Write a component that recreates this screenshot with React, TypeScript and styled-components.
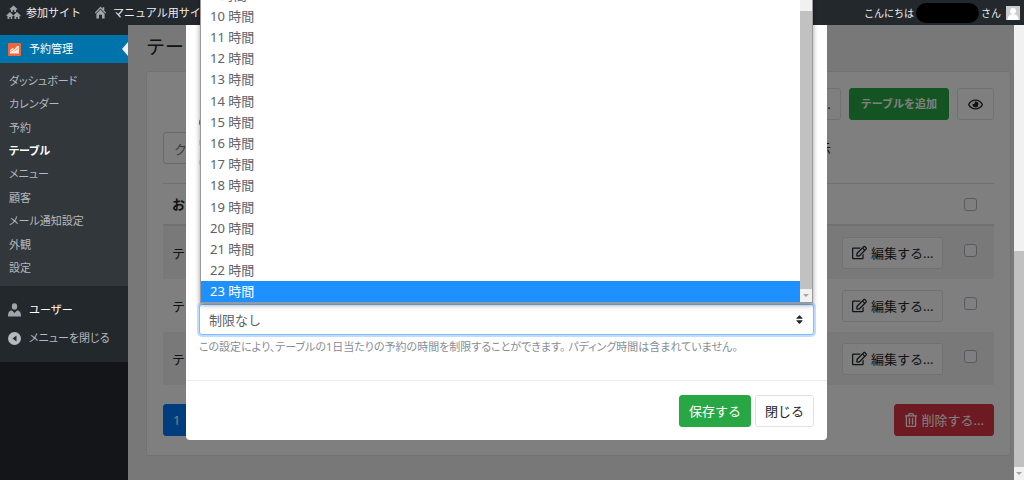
import React from "react";
import styled, { createGlobalStyle, css } from "styled-components";
import { FaRegEdit, FaRegEye, FaRegTrashAlt, FaSort } from "react-icons/fa";

const Global = createGlobalStyle`
  *, *::before, *::after { box-sizing: border-box; }
  body {
    margin: 0;
    overflow: hidden;
    background: #f1f1f1;
    font-family: "Noto Sans", "Noto Sans CJK JP", sans-serif;
    font-size: 13px;
    line-height: 20px;
    color: #212529;
  }
  button, input, select { font: inherit; color: inherit; margin: 0; }
  ul { list-style: none; margin: 0; padding: 0; }
  a { color: inherit; text-decoration: none; }
`;

const proportionalKana = css`
  font-size: 11px;
  font-feature-settings: "palt";
`;

const Screen = styled.div`
  position: relative;
  display: flex;
  flex-direction: column;
  height: 100vh;
`;

const AdminBar = styled.header`
  position: relative;
  z-index: 20;
  flex: none;
  display: flex;
  align-items: center;
  gap: 12px;
  height: 25px;
  padding: 0 4px 0 6px;
  background: #23282d;
  color: #eee;
  font-size: 11px;
  line-height: 24px;
`;

const BarLink = styled.a`
  display: flex;
  align-items: center;
  gap: 5px;
  white-space: nowrap;
  svg { color: #a0a5aa; }
`;

const Account = styled(BarLink)`
  margin-left: auto;
  gap: 2px;
  font-size: 10px;
`;

const HiddenName = styled.span`
  width: 63px;
  height: 20px;
  border-radius: 10px;
  background: #000;
`;

const Avatar = styled.svg`
  margin-left: 3px;
  background: #ccc;
`;

const Columns = styled.div`
  flex: 1;
  min-height: 0;
  display: flex;
`;

const Sidebar = styled.nav`
  position: relative;
  z-index: 20;
  flex: none;
  width: 128px;
  background: #141519;
  color: #eee;
`;

const Menu = styled.div`
  padding: 10px 0;
  background: #23282d;
`;

const MenuLink = styled.a<{ $active?: boolean; $muted?: boolean }>`
  display: flex;
  align-items: center;
  gap: 8px;
  height: 28px;
  padding-left: 8px;
  font-size: 11px;
  color: ${(p) => (p.$muted ? "#b4b9be" : "#fff")};
  svg { color: #a0a5aa; }
  ${(p) => p.$muted && proportionalKana}
  ${(p) =>
    p.$active &&
    css`
      position: relative;
      background: #0073aa;
      &::after {
        content: "";
        position: absolute;
        right: 0;
        top: 7px;
        border: 7px solid transparent;
        border-left: 0;
        border-right: 6px solid #f1f1f1;
      }
    `}
`;

const SubMenu = styled.ul`
  display: flex;
  flex-direction: column;
  height: 223px;
  padding: 6px 0 6px 9px;
  margin-bottom: 10px;
  background: #32373c;
`;

const SubItem = styled.li<{ $current?: boolean }>`
  flex: 1;
  display: flex;
  align-items: center;
  ${proportionalKana}
  font-weight: ${(p) => (p.$current ? 700 : 400)};
  color: ${(p) => (p.$current ? "#fff" : "#b4b9be")};
`;

const Main = styled.main`
  flex: 1;
  min-width: 0;
  padding: 8px 3px 0 18px;
`;

const Heading = styled.h1`
  margin: 0 0 10px;
  font-size: 19px;
  line-height: 28px;
  font-weight: 400;
`;

const Card = styled.section`
  padding: 16px 16px 19px;
  border: 1px solid #e5e5e5;
  border-radius: 3px;
  background: #fff;
`;

const Row = styled.div<{ $end?: boolean; $gap?: number }>`
  display: flex;
  align-items: center;
  justify-content: ${(p) => (p.$end ? "flex-end" : "space-between")};
  gap: ${(p) => p.$gap ?? 8}px;
`;

const tones = {
  light: css`background: #fff; border-color: #dee2e6; color: #212529;`,
  green: css`background: #28a745; border-color: #28a745; color: #fff;`,
  red: css`background: #dc3545; border-color: #dc3545; color: #fff;`,
  blue: css`background: #007bff; border-color: #007bff; color: #fff;`,
};

const Button = styled.button<{ $tone: keyof typeof tones; $strong?: boolean }>`
  display: inline-flex;
  align-items: center;
  justify-content: center;
  gap: 4px;
  height: 32px;
  padding: 0 9px;
  border: 1px solid;
  border-radius: 3px;
  white-space: nowrap;
  ${(p) => tones[p.$tone]}
  ${(p) => p.$strong && css`padding: 0 11px; font-size: 11px; font-weight: 700;`}
`;

const IconButton = styled(Button)`
  width: 37px;
`;

const Search = styled.input`
  width: 300px;
  height: 32px;
  padding: 0 10px;
  border: 1px solid #ced4da;
  border-radius: 3px;
  background: #fff;
  color: #6c757d;
`;

const Filters = styled(Row)`
  margin: 12px 0 19px;
  padding-right: 163px;
`;

const Check = styled.input`
  appearance: none;
  display: block;
  width: 13px;
  height: 13px;
  border: 1px solid #adb5bd;
  border-radius: 3px;
  background: #fff;
`;

const Table = styled.table`
  width: 100%;
  border-collapse: separate;
  border-spacing: 0;
  th, td {
    height: 53px;
    padding: 0 9px;
    text-align: left;
    vertical-align: middle;
  }
  th {
    height: 43px;
    border-top: 1px solid #dee2e6;
    border-bottom: 2px solid #dee2e6;
    font-weight: 700;
  }
  tbody tr:nth-child(odd) { background: #f2f2f2; }
  th:nth-child(2), td:nth-child(2) { width: 112px; padding: 0; }
  th:nth-child(3), td:nth-child(3) { width: 40px; padding: 0 10px; }
  td ${Check} { margin-bottom: 4px; }
`;

const CardFoot = styled(Row)`
  margin-top: 19px;
`;

const PageScroll = styled.div`
  position: relative;
  z-index: 20;
  flex: none;
  display: flex;
  flex-direction: column;
  justify-content: flex-end;
  align-items: center;
  width: 10px;
  background: #f1f1f1;
`;

const Thumb = styled.div`
  flex: none;
  width: 100%;
  height: 216px;
  background: #c1c1c1;
`;

const ArrowDown = styled.span`
  margin: 5px 0;
  border: 3px solid transparent;
  border-top-color: #a3a3a3;
  border-bottom: 0;
`;

const Backdrop = styled.div`
  position: absolute;
  inset: 0 10px 0 0;
  background: rgba(0, 0, 0, 0.5);
`;

const ModalLayer = styled.div`
  position: absolute;
  inset: 0 11px auto 0;
  display: flex;
  justify-content: center;
`;

const Dialog = styled.div`
  width: 641px;
  border-radius: 0 0 4px 4px;
  background: #fff;
`;

const DialogBody = styled.div`
  padding: 90px 13px 23px;
`;

const Choices = styled.div`
  display: flex;
  flex-direction: column;
  gap: 7px;
  height: 214px;
  padding-top: 26px;
`;

const Radio = styled.input`
  appearance: none;
  width: 13px;
  height: 13px;
  border: 1px solid #ced4da;
  border-radius: 50%;
  &:checked { border-color: #007bff; background: #007bff; }
`;

const Field = styled.div`
  position: relative;
`;

const SelectBox = styled.div`
  position: relative;
  display: flex;
  align-items: center;
  svg { position: absolute; right: 9px; }
`;

const Select = styled.select`
  appearance: none;
  width: 100%;
  height: 31px;
  padding: 0 9px;
  border: 1px solid #80bdff;
  border-radius: 3px;
  box-shadow: 0 0 0 2px #bfdeff;
  outline: 0;
  background: #fff;
  color: #5c6268;
`;

const Popup = styled.div`
  position: absolute;
  z-index: 30;
  left: 1px;
  right: 1px;
  bottom: calc(100% + 1px);
  display: flex;
  height: 320px;
  border: 1px solid #9a9a9a;
  background: #fff;
  box-shadow: 0 2px 5px rgba(0, 0, 0, 0.4);
`;

const Options = styled.ul`
  flex: 1;
  display: flex;
  flex-direction: column;
`;

const Option = styled.li<{ $on: boolean }>`
  flex: 1;
  display: flex;
  align-items: center;
  padding-left: 9px;
  background: ${(p) => (p.$on ? "#1e90ff" : "#fff")};
  color: ${(p) => (p.$on ? "#fff" : "#5c6268")};
`;

const PopupScroll = styled.div`
  display: flex;
  flex-direction: column;
  align-items: center;
  width: 12px;
  padding-top: 27px;
  background: #f1f1f1;
`;

const PopupThumb = styled.div`
  flex: 1;
  width: 100%;
  background: #c1c1c1;
`;

const Help = styled.p`
  margin: 2px 0 0;
  ${proportionalKana}
  color: #868e96;
`;

const DialogFoot = styled(Row)`
  padding: 14px 13px 13px;
  border-top: 1px solid #e9ecef;
`;

const Network = () => (
  <svg width="15" height="15" viewBox="0 0 30 30" fill="currentColor" fillRule="evenodd" aria-hidden="true">
    <path d="M15 1l8 7-1.500 1.500L20 8.500V14h-3.500v-4h-3v4H10V8.500L8.500 9.500 7 8z" />
    <path d="M8 14l7 7-1.500 1.500-1-1V28H9.500v-4h-3v4H3v-6.500l-1 1L.5 21z" />
    <path d="M22 14l7.500 7-1.500 1.500-1-1V28h-3.500v-4h-3v4H17v-6.500l-1 1L14.500 21z" />
  </svg>
);

const Home = () => (
  <svg width="15" height="15" viewBox="0 0 20 20" fill="currentColor" aria-hidden="true">
    <path d="M16 8.500l1.500 1.600-1.100 1.100L10 4.600l-6.400 6.600-1.100-1.100L10 2l2.800 2.900V3H15v4.300zM10 6l5.500 5.700V18H12v-5H8v5H4.500v-6.300z" />
  </svg>
);

const Person = () => (
  <svg width="13" height="14" viewBox="0 0 13 14" fill="currentColor" aria-hidden="true">
    <ellipse cx="6.500" cy="3.400" rx="2.700" ry="3.200" />
    <path d="M4 7.500l2.500 2.500L9 7.500c2.600 0 4 1.500 4 6H0c0-4.500 1.400-6 4-6z" />
  </svg>
);

const Brand = () => (
  <svg width="13" height="13" viewBox="0 0 13 13" aria-hidden="true">
    <rect width="13" height="13" rx="1" fill="#f0653a" />
    <path d="M2 7l2.500-2 2 1L9 3h2v7.500H2z" fill="#fde6dd" />
    <path d="M2.500 8.500l3-2 2 1 3-2.500" stroke="#f5a184" fill="none" />
  </svg>
);

const Collapse = () => (
  <svg width="13" height="13" viewBox="0 0 13 13" aria-hidden="true">
    <circle cx="6.500" cy="6.500" r="6.500" fill="#b4b9be" />
    <path d="M8.500 3.500v6l-4-3z" fill="#23282d" />
  </svg>
);

const submenu = ["ダッシュボード", "カレンダー", "予約", "テーブル", "メニュー", "顧客", "メール通知設定", "外観", "設定"];
const hours = Array.from({ length: 15 }, (_, i) => `${i + 9} 時間`);

export default function App() {
  return (
    <Screen>
      <Global />
      <AdminBar>
        <BarLink href="#sites"><Network />参加サイト</BarLink>
        <BarLink href="#site"><Home />マニュアル用サイト</BarLink>
        <Account href="#account">
          こんにちは<HiddenName />さん
          <Avatar width="14" height="14" viewBox="0 0 14 14" aria-hidden="true">
            <circle cx="7" cy="5" r="3" fill="#fff" />
            <path d="M1.500 14c0-8 11-8 11 0z" fill="#fff" />
          </Avatar>
        </Account>
      </AdminBar>
      <Columns>
        <Sidebar>
          <Menu>
            <MenuLink href="#booking" $active><Brand />予約管理</MenuLink>
            <SubMenu>
              {submenu.map((t) => (
                <SubItem key={t} $current={t === "テーブル"}><a href="#sub">{t}</a></SubItem>
              ))}
            </SubMenu>
            <MenuLink href="#users"><Person />ユーザー</MenuLink>
            <MenuLink href="#collapse" $muted><Collapse />メニューを閉じる</MenuLink>
          </Menu>
        </Sidebar>
        <Main>
          <Heading>テー</Heading>
          <Card>
            <Row $end>
              <Button $tone="light">...</Button>
              <Button $tone="green" $strong>テーブルを追加</Button>
              <IconButton $tone="light" aria-label="表示"><FaRegEye size={15} /></IconButton>
            </Row>
            <Filters>
              <Search aria-label="検索" defaultValue="ク" />
              <span>表示</span>
            </Filters>
            <Table>
              <thead>
                <tr><th>お</th><th /><th><Check type="checkbox" aria-label="すべて" /></th></tr>
              </thead>
              <tbody>
                {[1, 2, 3].map((n) => (
                  <tr key={n}>
                    <td>テ</td>
                    <td><Button $tone="light"><FaRegEdit size={15} />編集する...</Button></td>
                    <td><Check type="checkbox" aria-label={`テーブル${n}`} /></td>
                  </tr>
                ))}
              </tbody>
            </Table>
            <CardFoot>
              <Button $tone="blue">1</Button>
              <Button $tone="red"><FaRegTrashAlt size={14} />削除する...</Button>
            </CardFoot>
          </Card>
        </Main>
        <PageScroll><Thumb /><ArrowDown /></PageScroll>
      </Columns>
      <Backdrop />
      <ModalLayer>
        <Dialog role="dialog" aria-label="テーブル">
          <DialogBody>
            <Choices>
              <Radio type="radio" name="capacity" defaultChecked aria-label="1" />
              <Radio type="radio" name="capacity" aria-label="2" />
              <Radio type="radio" name="capacity" aria-label="3" />
            </Choices>
            <Field>
              <SelectBox>
                <Select aria-label="時間制限"><option>制限なし</option></Select>
                <FaSort size={11} />
              </SelectBox>
              <Popup>
                <Options role="listbox">
                  {hours.map((h) => (
                    <Option key={h} role="option" $on={h === "23 時間"} aria-selected={h === "23 時間"}>{h}</Option>
                  ))}
                </Options>
                <PopupScroll><PopupThumb /><ArrowDown /></PopupScroll>
              </Popup>
            </Field>
            <Help>この設定により、テーブルの1日当たりの予約の時間を制限することができます。 パディング時間は含まれていません。</Help>
          </DialogBody>
          <DialogFoot $end $gap={4}>
            <Button $tone="green">保存する</Button>
            <Button $tone="light">閉じる</Button>
          </DialogFoot>
        </Dialog>
      </ModalLayer>
    </Screen>
  );
}
